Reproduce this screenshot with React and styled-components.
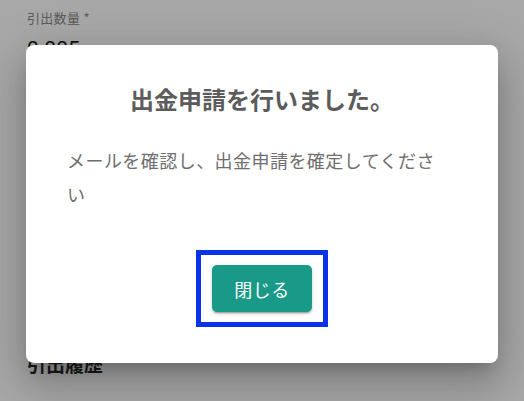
import React from 'react'
import styled, { createGlobalStyle } from 'styled-components'

const GlobalStyle = createGlobalStyle`
  html, body {
    margin: 0;
    padding: 0;
    background: #ffffff;
    font-family: 'Noto Sans CJK JP', 'Noto Sans', sans-serif;
  }
`

const Page = styled.main`
  position: relative;
  width: 524px;
  height: 401px;
  overflow: hidden;
  background: #ffffff;
`

const Form = styled.section`
  display: flex;
  flex-direction: column;
  padding: 9px 27px 0;
`

const FieldLabel = styled.label`
  font-size: 13px;
  line-height: 18px;
  color: #8a8a8a;
  letter-spacing: 0.3px;
`

const FieldValue = styled.div`
  margin-top: 9px;
  font-size: 21px;
  line-height: 26px;
  color: #1a1a1a;
  font-family: 'Roboto', 'Noto Sans', sans-serif;
`

const SectionTitle = styled.h2`
  margin: 289px 0 0;
  font-size: 19px;
  line-height: 26px;
  font-weight: 700;
  color: #2a2a2a;
`

const Backdrop = styled.div`
  position: absolute;
  inset: 0;
  background: rgba(0, 0, 0, 0.34);
  display: flex;
  justify-content: center;
  align-items: flex-start;
  padding-top: 45px;
`

const Dialog = styled.div`
  width: 472px;
  height: 318px;
  box-sizing: border-box;
  background: #ffffff;
  border-radius: 8px;
  box-shadow:
    0 11px 15px -7px rgba(0, 0, 0, 0.2),
    0 24px 38px 3px rgba(0, 0, 0, 0.14),
    0 9px 46px 8px rgba(0, 0, 0, 0.12);
  display: flex;
  flex-direction: column;
  align-items: center;
  padding: 37px 0 0;
`

const Title = styled.h1`
  margin: 0;
  font-size: 24px;
  line-height: 34px;
  font-weight: 700;
  color: #5c5c5c;
`

const Message = styled.p`
  align-self: stretch;
  margin: 27px 0 0;
  padding: 0 0 0 41px;
  width: 385px;
  font-size: 18px;
  line-height: 34px;
  letter-spacing: 0.45px;
  color: #6e6e6e;
`

const Highlight = styled.div`
  margin-top: 39px;
  border: 5px solid #0a32e6;
  padding: 10px 11px;
  display: flex;
`

const CloseButton = styled.button`
  width: 100px;
  height: 47px;
  border: none;
  border-radius: 5px;
  background: #199a88;
  color: #ffffff;
  font-family: 'Noto Sans CJK JP', 'Noto Sans', sans-serif;
  font-size: 18px;
  letter-spacing: 0.5px;
  cursor: pointer;
  box-shadow:
    0 3px 1px -2px rgba(0, 0, 0, 0.2),
    0 2px 2px 0 rgba(0, 0, 0, 0.14),
    0 1px 5px 0 rgba(0, 0, 0, 0.12);
`

const App = () => (
  <Page>
    <GlobalStyle />
    <Form>
      <FieldLabel>引出数量 *</FieldLabel>
      <FieldValue>0.005</FieldValue>
      <SectionTitle>引出履歴</SectionTitle>
    </Form>
    <Backdrop>
      <Dialog role="dialog">
        <Title>出金申請を行いました。</Title>
        <Message>メールを確認し、出金申請を確定してください</Message>
        <Highlight>
          <CloseButton>閉じる</CloseButton>
        </Highlight>
      </Dialog>
    </Backdrop>
  </Page>
)

export default App
